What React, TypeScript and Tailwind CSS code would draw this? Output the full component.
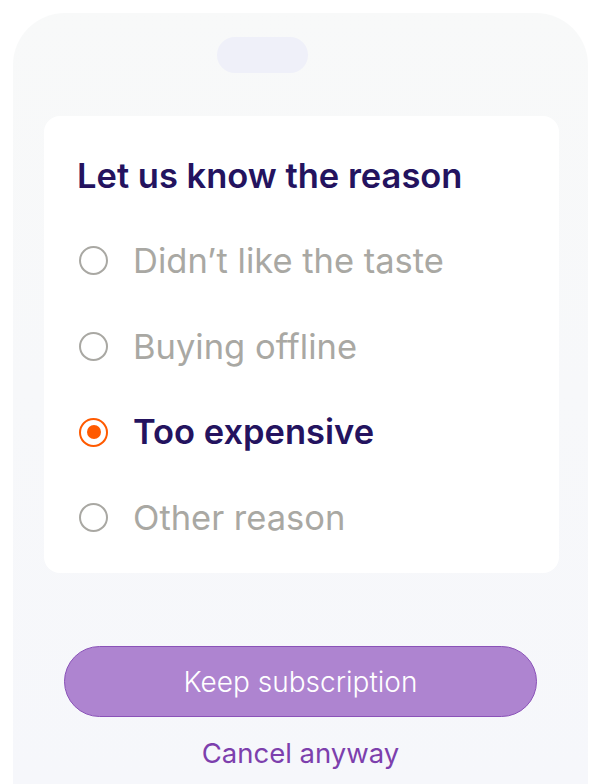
import { useState } from "react";

const reasons = [
  "Didn’t like the taste",
  "Buying offline",
  "Too expensive",
  "Other reason",
];

function Radio({ checked }: { checked: boolean }) {
  return (
    <span
      className={
        "flex h-[29px] w-[29px] shrink-0 items-center justify-center rounded-full border-[2.5px] " +
        (checked ? "border-[#ff5a00]" : "border-[#a9a8a3]")
      }
    >
      {checked && <span className="h-[14px] w-[14px] rounded-full bg-[#ff5a00]" />}
    </span>
  );
}

export default function App() {
  const [selected, setSelected] = useState(2);

  return (
    <div
      className="h-[784px] w-[601px] overflow-hidden bg-white px-[13px] pt-[13px]"
      style={{ fontFamily: "Inter, 'Noto Sans', sans-serif" }}
    >
      <div className="flex h-full flex-col rounded-t-[52px] bg-gradient-to-b from-[#f8f9f9] to-[#f6f7fb]">
        {/* Notch */}
        <div className="ml-[204px] mt-[24px] h-[36px] w-[91px] rounded-full bg-[#eff0f9]" />

        {/* Reason card */}
        <div className="ml-[31px] mt-[43px] h-[457px] w-[515px] rounded-[16px] bg-white px-[33px] pt-[40px]">
          <h2 className="text-[34.5px] font-semibold leading-[40px] text-[#24135f]">
            Let us know the reason
          </h2>
          <div className="mt-[22px] flex flex-col">
            {reasons.map((reason, i) => (
              <label
                key={reason}
                className="flex h-[85.7px] cursor-pointer items-center gap-[25px] pl-[2px]"
                onClick={() => setSelected(i)}
              >
                <Radio checked={selected === i} />
                <span
                  className={
                    "text-[34.5px] leading-[40px] " +
                    (selected === i
                      ? "font-semibold text-[#24135f]"
                      : "text-[#a9a8a3]")
                  }
                >
                  {reason}
                </span>
              </label>
            ))}
          </div>
        </div>

        {/* Actions */}
        <div className="mt-[73px] flex flex-col items-center">
          <button className="h-[71px] w-[473px] rounded-full border border-[#8a52b8] bg-[#ae84d0] text-[28px] font-light text-white">
            Keep subscription
          </button>
          <button className="mt-[16px] text-[27.5px] text-[#7d3fad]">
            Cancel anyway
          </button>
        </div>
      </div>
    </div>
  );
}
